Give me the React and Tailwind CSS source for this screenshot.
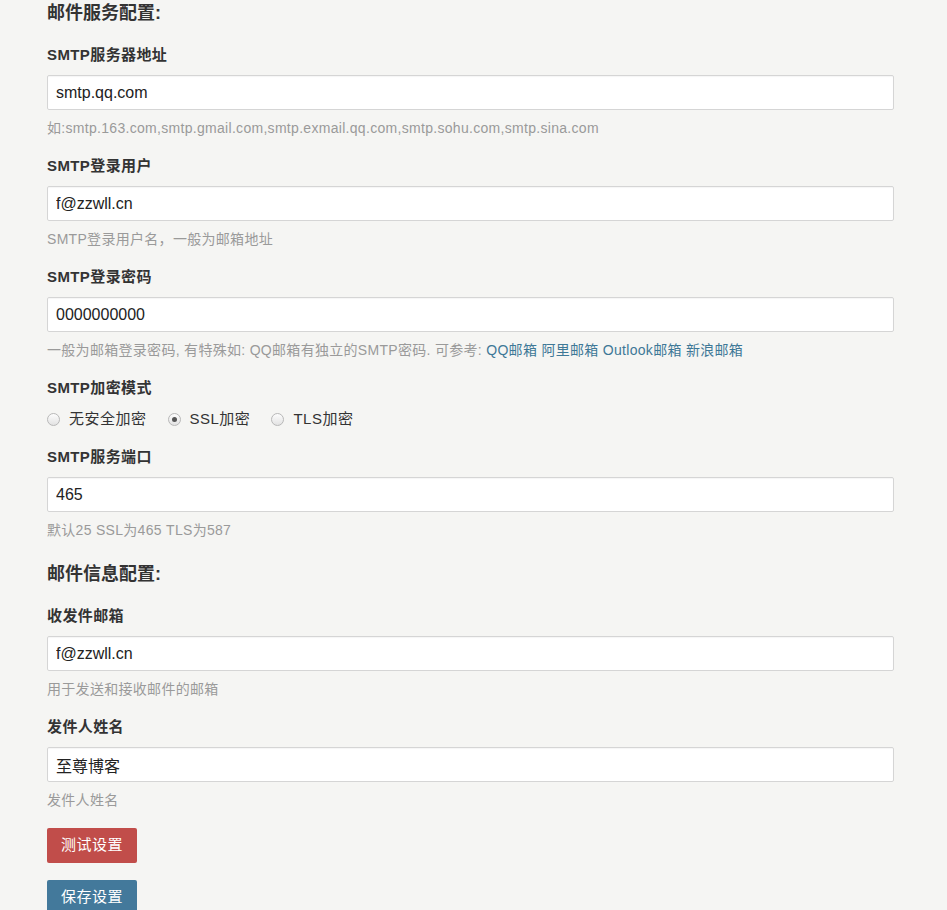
import { useState } from 'react';

const font = { fontFamily: '"Liberation Sans", Arial, "Noto Sans CJK SC", sans-serif' };

const Field = ({ label, value, help }) => (
  <div className="mb-[18px]">
    <label className="block text-[15px] leading-5 font-bold tracking-[0.4px] text-[#333] mb-[10px]">{label}</label>
    <input
      type="text"
      defaultValue={value}
      className="block w-full h-[35px] px-[8px] text-[16px] text-[#222] bg-white border border-[#d5d5d5] rounded-[2px] shadow-[inset_0_1px_1px_rgba(0,0,0,0.04)] outline-none"
    />
    <p className="mt-[8px] text-[14px] leading-5 tracking-[0.3px] text-[#9a9a9a]">{help}</p>
  </div>
);

const Radio = ({ label, checked, onClick }) => (
  <label className="flex items-center gap-[9px] mr-[21px] cursor-pointer" onClick={onClick}>
    <span className="w-[13px] h-[13px] rounded-full border border-[#b8b8b8] bg-gradient-to-b from-[#fdfdfd] to-[#e2e2e2] flex items-center justify-center">
      {checked && <span className="w-[5px] h-[5px] rounded-full bg-[#555]" />}
    </span>
    <span className="text-[15px] leading-5 tracking-[0.5px] text-[#333]">{label}</span>
  </label>
);

export default function App() {
  const [mode, setMode] = useState('ssl');

  return (
    <div className="min-h-[910px] bg-[#f5f5f3]" style={font}>
      <div className="pl-[47px] pr-[53px] pt-[2px]">
        {/* 邮件服务配置 */}
        <h3 className="text-[18px] leading-[22px] font-bold text-[#333] mb-[21px]">邮件服务配置:</h3>

        <Field
          label="SMTP服务器地址"
          value="smtp.qq.com"
          help="如:smtp.163.com,smtp.gmail.com,smtp.exmail.qq.com,smtp.sohu.com,smtp.sina.com"
        />
        <Field label="SMTP登录用户" value="f@zzwll.cn" help="SMTP登录用户名，一般为邮箱地址" />
        <Field
          label="SMTP登录密码"
          value="0000000000"
          help={
            <>
              一般为邮箱登录密码, 有特殊如: QQ邮箱有独立的SMTP密码. 可参考:{' '}
              <a className="text-[#3e7897]">QQ邮箱</a> <a className="text-[#3e7897]">阿里邮箱</a>{' '}
              <a className="text-[#3e7897]">Outlook邮箱</a> <a className="text-[#3e7897]">新浪邮箱</a>
            </>
          }
        />

        <div className="mb-[18px]">
          <label className="block text-[15px] leading-5 font-bold tracking-[0.4px] text-[#333] mb-[11px]">SMTP加密模式</label>
          <div className="flex items-center">
            <Radio label="无安全加密" checked={mode === 'none'} onClick={() => setMode('none')} />
            <Radio label="SSL加密" checked={mode === 'ssl'} onClick={() => setMode('ssl')} />
            <Radio label="TLS加密" checked={mode === 'tls'} onClick={() => setMode('tls')} />
          </div>
        </div>

        <Field label="SMTP服务端口" value="465" help="默认25 SSL为465 TLS为587" />

        {/* 邮件信息配置 */}
        <h3 className="mt-[23px] text-[18px] leading-[22px] font-bold text-[#333] mb-[21px]">邮件信息配置:</h3>

        <Field label="收发件邮箱" value="f@zzwll.cn" help="用于发送和接收邮件的邮箱" />
        <Field label="发件人姓名" value="至尊博客" help="发件人姓名" />

        <div className="flex flex-col items-start gap-[17px]">
          <button className="h-[35px] px-[14px] text-[15px] tracking-[0.5px] text-white bg-[#c14d4a] rounded-[2px]">测试设置</button>
          <button className="h-[35px] px-[14px] text-[15px] tracking-[0.5px] text-white bg-[#43799b] rounded-[2px]">保存设置</button>
        </div>
      </div>
    </div>
  );
}
